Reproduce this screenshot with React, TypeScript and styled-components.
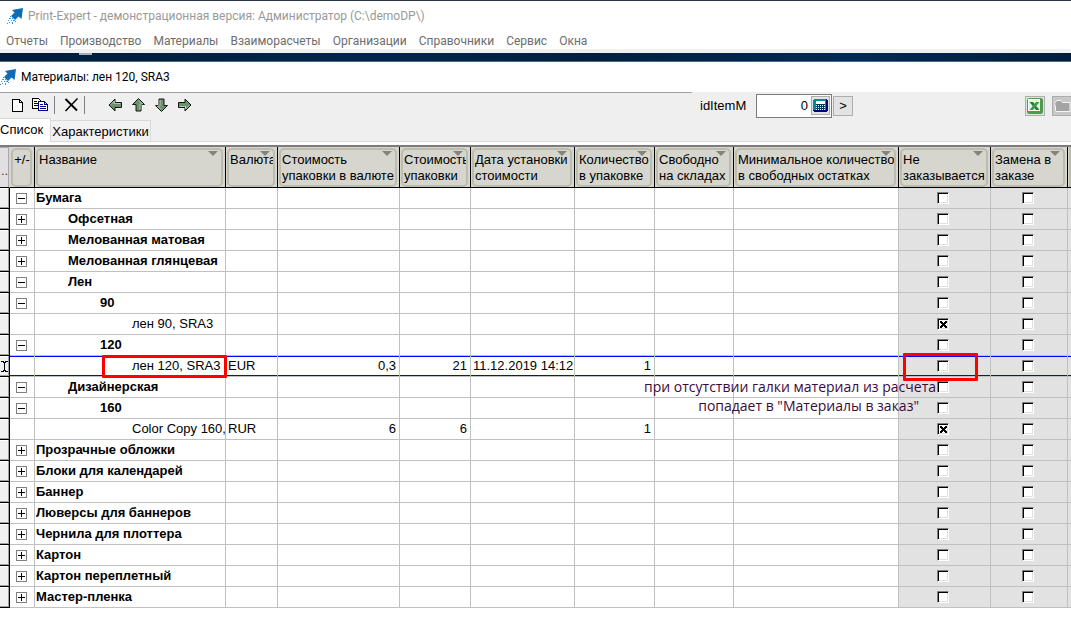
import React, { useState } from "react";
import styled, { createGlobalStyle, css } from "styled-components";

const Global = createGlobalStyle`
  *, *::before, *::after { box-sizing: border-box; }
  body { margin: 0; background: #fff; font-family: "Liberation Sans", Arial, sans-serif; font-size: 13px; color: #000; }
  button, input { font: inherit; color: inherit; }
`;

const uiFont = `Roboto, "Noto Sans", sans-serif`;
const noteFont = `"Open Sans", "Noto Sans", sans-serif`;

const Page = styled.div`
  display: flex;
  flex-direction: column;
  overflow: hidden;
`;

const AppBar = styled.header`
  border-top: 1px solid #2b3546;
  background: #fff;
`;

const TitleRow = styled.div<{ $child?: boolean }>`
  display: flex;
  align-items: center;
  gap: 5px;
  height: 30px;
  padding: ${(p) => (p.$child ? "0" : "0 0 0 7px")};
  font-family: ${uiFont};
  font-size: 12px;
  color: ${(p) => (p.$child ? "#000" : "#999")};
  white-space: nowrap;
`;

const Title = styled.h1`
  margin: 0;
  font-size: inherit;
  font-weight: 400;
`;

const MenuBar = styled.nav`
  display: flex;
  gap: 12px;
  height: 18px;
  padding-left: 6px;
`;

const MenuItem = styled.button`
  padding: 0;
  border: 0;
  background: none;
  font-family: ${uiFont};
  font-size: 12px;
  line-height: 20px;
  color: #6d6d6d;
`;

const Backdrop = styled.div`
  height: 13px;
  padding-left: 79px;
  border-top: 4px solid #f0f0f0;
  border-bottom: 1px solid #1a78c8;
  background: linear-gradient(90deg, #001c3a, #00254c 35%, #001f40 55%, #002a55 80%, #001c3a);

  &::before {
    content: "";
    display: block;
    width: 13px;
    height: 2px;
    background: #a8adb4;
  }
`;

const ToolBar = styled.div`
  display: grid;
  grid-template-columns: minmax(0, 1fr) 379px;
  height: 27px;
  background: #efefef;
`;

const ToolGroup = styled.div`
  display: flex;
  align-items: center;
  gap: 8px;
  padding: 0 0 2px 10px;
  border-top: 1px solid #a0a0a0;
`;

const ToolButton = styled.button`
  display: flex;
  padding: 0;
  border: 0;
  background: none;
`;

const ArrowGroup = styled.div`
  display: flex;
  gap: 8px;
  margin-left: 14px;
`;

const Separator = styled.span`
  width: 1px;
  height: 18px;
  margin: 0 1px 0 -2px;
  background: #808080;
`;

const FieldGroup = styled.form`
  display: flex;
  align-items: center;
  padding-left: 8px;
`;

const FieldLabel = styled.label`
  width: 56px;
  font-size: 13px;
`;

const NumberField = styled.div`
  display: flex;
  align-items: center;
  width: 76px;
  height: 24px;
  margin-right: 1px;
  padding-right: 1px;
  border: 1px solid #7a7a7a;
  background: #fff;
`;

const NumberInput = styled.input`
  flex: 1;
  min-width: 0;
  padding: 0 3px 0 0;
  border: 0;
  outline: 0;
  background: none;
  text-align: right;
  font-size: 13px;
`;

const RaisedButton = styled.button<{ $muted?: boolean }>`
  display: flex;
  align-items: center;
  justify-content: center;
  flex: none;
  width: 20px;
  height: 20px;
  padding: 0;
  border: 1px solid #adadad;
  background: ${(p) => (p.$muted ? "#c8c8c8" : "#e3e3e3")};
`;

const CalcButton = styled(RaisedButton)`
  width: 19px;
  height: 19px;
`;

const ExportGroup = styled.div`
  display: flex;
  gap: 7px;
  margin-left: auto;
  margin-right: -1px;
`;

const TabStrip = styled.div`
  display: flex;
  align-items: flex-end;
  height: 23px;
  border-bottom: 1px solid #d9d9d9;
  background: #efefef;
`;

const Tab = styled.button<{ $active?: boolean }>`
  flex: none;
  padding: 0;
  font-size: 13px;
  white-space: nowrap;
  ${(p) =>
    p.$active
      ? css`
          width: 51px;
          height: 24px;
          margin-bottom: -1px;
          padding-bottom: 3px;
          border: 1px solid #d9d9d9;
          border-width: 1px 1px 0 0;
          background: #fff;
          text-align: left;
        `
      : css`
          width: 100px;
          height: 21px;
          border: 1px solid #d9d9d9;
          border-width: 1px 1px 0 0;
          background: #f2f2f2;
        `}
`;

const GridFrame = styled.main`
  margin-top: 3px;
  border-top: 2px solid #7c7c7c;
`;

const Grid = styled.table`
  width: 100%;
  table-layout: fixed;
  border-collapse: separate;
  border-spacing: 0;
`;

const HeadCell = styled.th`
  height: 41px;
  padding: 1px 2px 0 1px;
  border-right: 1px solid #000;
  border-bottom: 1px solid #000;
  background: #d6d6ce;
  font-weight: 400;
  text-align: left;
  vertical-align: top;

  &:last-child {
    border-right: 0;
    box-shadow: inset -2px 0 #bcbcae;
  }
`;

const HeadFrame = styled.div<{ $center?: boolean }>`
  position: relative;
  height: 39px;
  padding: 2px 0 0 1px;
  border: 2px solid #bcbcae;
  border-radius: 5px;
  overflow: hidden;
  line-height: 16px;
  white-space: pre;
  text-align: ${(p) => (p.$center ? "center" : "left")};
`;

const DropMark = styled.span`
  position: absolute;
  top: 1px;
  right: 3px;
  border: 5px solid transparent;
  border-top-color: #84847c;
  border-bottom: 0;
`;

const CornerCell = styled.th`
  height: 41px;
  padding: 18px 0 0 1px;
  border-right: 1px solid #d6d6ce;
  border-bottom: 1px solid #000;
  background: #e1dfe1;
  box-shadow: inset -1px 0 #a8a8a8, inset 0 1px #a8a8a8;
  font-weight: 400;
  text-align: left;
  vertical-align: top;
  line-height: 12px;
  color: #5a3a1a;
`;

const Selector = styled.td`
  height: 21px;
  padding: 0 0 0 1px;
  border-right: 1px solid #000;
  border-bottom: 1px solid #000;
  background: #f0f0f0;
  box-shadow: inset -1px -1px #a0a0a0, inset 0 1px #fff;
`;

const Cell = styled.td<{ $right?: boolean; $shade?: boolean; $selected?: boolean }>`
  position: relative;
  height: 21px;
  padding: ${(p) => (p.$right ? "0 3px 0 2px" : p.$shade ? "0 5px 0 2px" : "0 2px")};
  border-right: 1px solid #c0c0c0;
  border-bottom: 1px solid #c0c0c0;
  background: ${(p) => (p.$shade ? "#e2e2e2" : "#fff")};
  line-height: 20px;
  vertical-align: top;
  white-space: nowrap;
  text-align: ${(p) => (p.$right ? "right" : "left")};
  ${(p) => p.$selected && "box-shadow: inset 0 1px #00f, inset 0 -1px #00f;"}

  &:last-child {
    padding: 0;
    border-right: 0;
  }
`;

const NameText = styled.div<{ $level: number; $bold: boolean }>`
  margin: 0 -2px 0 -1px;
  padding-left: ${(p) => p.$level * 32}px;
  overflow: hidden;
  line-height: 19px;
  font-weight: ${(p) => (p.$bold ? 700 : 400)};
`;

const Expander = styled.button`
  display: flex;
  margin: 5px 0 0 4px;
  padding: 0;
  border: 0;
  background: none;
`;

const Check = styled.input`
  appearance: none;
  display: block;
  width: 12px;
  height: 12px;
  margin: 4px auto 0;
  border: 1px solid #808080;
  border-right-color: #fff;
  border-bottom-color: #fff;
  background: #fff;
  box-shadow: inset 1px 1px #000, inset -1px -1px #e0e0e0;

  &:checked {
    background-image:
      linear-gradient(45deg, transparent 38%, #000 38%, #000 62%, transparent 62%),
      linear-gradient(-45deg, transparent 38%, #000 38%, #000 62%, transparent 62%);
    background-position: 2px 2px;
    background-size: 7px 7px;
    background-repeat: no-repeat;
  }
`;

const Highlight = styled.span<{ $wide?: boolean }>`
  position: absolute;
  z-index: 2;
  border: 3px solid #f00;
  border-radius: 1px;
  pointer-events: none;
  ${(p) => (p.$wide ? "inset: -1px -2px -2px 67px;" : "inset: -3px 12px -5px 4px;")}
`;

const Note = styled.p`
  position: absolute;
  z-index: 2;
  top: 0;
  right: 54px;
  margin: 0;
  font-family: ${noteFont};
  font-size: 14px;
  line-height: 19px;
  text-align: right;
  color: #3c0a3c;
  pointer-events: none;
`;

const NoteLine = styled.span<{ $inset?: boolean }>`
  display: block;
  padding-right: ${(p) => (p.$inset ? 17 : 0)}px;
`;

function Logo() {
  return (
    <svg width="16" height="16" viewBox="0 0 16 16" aria-hidden="true">
      <path d="M5 2 16 0 14.500 11 11.500 8.500 8 12 4 8 7.500 4.500Z" fill="#0f6cb6" />
      <path
        d="M3 8h1v1H3zM5 10h1v1H5zM2 10h2v1H2zM4 12h1v1H4zM6 12h2v1H6zM1 12h1v1H1zM2 14h1v1H2zM0 15h1v1H0zM5 14h1v2H5zM8 13h1v1H8z"
        fill="#4a90c8"
      />
    </svg>
  );
}

function DocIcon() {
  return (
    <svg width="14" height="16" viewBox="0 0 14 16" shapeRendering="crispEdges">
      <path d="M2.500 2.500H9.500L12.500 5.500V14.500H2.500Z" fill="#fff" stroke="#000" />
      <path d="M9.500 2.500V5.500H12.500" fill="none" stroke="#000" />
    </svg>
  );
}

function CopyIcon() {
  return (
    <svg width="16" height="16" viewBox="0 0 16 16" shapeRendering="crispEdges">
      <path d="M.5 1.500H6.500L8.500 3.500V11.500H.5Z" fill="#fff" stroke="#000" />
      <path d="M2 4.500H5M2 6.500H6M2 8.500H6" stroke="#000" />
      <path d="M6.500 4.500H12.500L15.500 7.500V13.500H6.500Z" fill="#fff" stroke="#000080" />
      <path d="M12.500 4.500V7.500H15.500M8 7.500H11M8 9.500H14M8 11.500H14" fill="none" stroke="#000080" />
    </svg>
  );
}

function DeleteIcon() {
  return (
    <svg width="14" height="16" viewBox="0 0 14 16">
      <path d="M1.500 2 13 13.500" stroke="#000" strokeWidth="2" />
      <path d="M13.500 1.500 1.500 14" stroke="#000" strokeWidth="1.500" />
    </svg>
  );
}

function ArrowIcon({ angle }: { angle: number }) {
  return (
    <svg width="15" height="14" viewBox="0 0 15 14">
      <g transform={`rotate(${angle} 7.500 7)`}>
        <path d="M1 7 7 1V4.500H13.500V9.500H7V13Z" fill="#6d9070" stroke="#101810" />
        <path d="M3 6.500 6.500 3V5.500H12.500" fill="none" stroke="#b4ccb4" />
      </g>
    </svg>
  );
}

function CalcIcon() {
  return (
    <svg width="15" height="13" viewBox="0 0 15 13" shapeRendering="crispEdges">
      <path d="M1 0H14V1H15V12H14V13H1V12H0V1H1Z" fill="#000080" />
      <path d="M1 0H13V11H0V1H1Z" fill="#008c94" />
      <rect x="3" y="2" width="9" height="9" fill="#003c50" />
      <rect x="3" y="2" width="9" height="3" fill="#fff" />
      <path d="M3 6.500H12M3 8.500H12M3 10.500H12" stroke="#e8ffff" strokeDasharray="1 1" />
    </svg>
  );
}

function ExcelIcon() {
  return (
    <svg width="16" height="16" viewBox="0 0 16 16">
      <rect x=".5" y=".5" width="15" height="15" rx="1" fill="#fff" stroke="#4f9a4f" />
      <path d="M14 1V15M1 14H15" stroke="#4f9a4f" strokeWidth="2" />
      <rect x="2" y="2" width="10" height="10" fill="#e4f2df" />
      <path d="M2.500 4H6L12.500 12H9Z" fill="#257a35" />
      <path d="M12.500 4H9L2.500 12H6Z" fill="#3f9a48" />
    </svg>
  );
}

function FolderIcon() {
  return (
    <svg width="18" height="14" viewBox="0 0 18 14">
      <path d="M2.500 12V8L1.500 4.500 4 1.500H8L9.500 3.500H17V12.500H3Z" fill="#a4a4a4" stroke="#f4f4f4" />
    </svg>
  );
}

function ExpandIcon({ open }: { open: boolean }) {
  return (
    <svg width="11" height="11" viewBox="0 0 11 11" shapeRendering="crispEdges">
      <rect x=".5" y=".5" width="10" height="10" fill="#fff" stroke="#808080" />
      <path d={open ? "M2 5.500H9" : "M2 5.500H9M5.500 2V9"} stroke="#000" />
    </svg>
  );
}

function CaretIcon() {
  return (
    <svg width="7" height="16" viewBox="0 0 7 16" shapeRendering="crispEdges">
      <path d="M0 4.500H3M4 4.500H7M2 5.500H5M2 13.500H5M0 14.500H3M4 14.500H7" stroke="#000" />
      <path d="M3.500 5V14" stroke="#000" />
    </svg>
  );
}

const menu = ["Отчеты", "Производство", "Материалы", "Взаиморасчеты", "Организации", "Справочники", "Сервис", "Окна"];

const arrows = [
  { angle: 0, label: "Назад" },
  { angle: 90, label: "Вверх" },
  { angle: 270, label: "Вниз" },
  { angle: 180, label: "Вперед" },
];

const columns = [
  { width: 191, title: "Название" },
  { width: 52, title: "Валюта" },
  { width: 122, title: "Стоимость\nупаковки в валюте" },
  { width: 71, title: "Стоимость\nупаковки" },
  { width: 104, title: "Дата установки\nстоимости" },
  { width: 80, title: "Количество\nв упаковке" },
  { width: 79, title: "Свободно\nна складах" },
  { width: 165, title: "Минимальное количество\nв свободных остатках" },
  { width: 92, title: "Не\nзаказывается" },
  { width: 77, title: "Замена в\nзаказе" },
];

type Row = {
  name: string;
  level: number;
  open?: boolean;
  leaf?: boolean;
  values?: string[];
  skip?: boolean;
  selected?: boolean;
  note?: string[];
};

const rows: Row[] = [
  { name: "Бумага", level: 0, open: true },
  { name: "Офсетная", level: 1 },
  { name: "Мелованная матовая", level: 1 },
  { name: "Мелованная глянцевая", level: 1 },
  { name: "Лен", level: 1, open: true },
  { name: "90", level: 2, open: true },
  { name: "лен 90, SRA3", level: 3, leaf: true, skip: true },
  { name: "120", level: 2, open: true },
  { name: "лен 120, SRA3", level: 3, leaf: true, selected: true, values: ["EUR", "0,3", "21", "11.12.2019 14:12", "1"] },
  {
    name: "Дизайнерская",
    level: 1,
    open: true,
    note: ["при отсутствии галки материал из расчета", 'попадает в "Материалы в заказ"'],
  },
  { name: "160", level: 2, open: true },
  { name: "Color Copy 160,", level: 3, leaf: true, skip: true, values: ["RUR", "6", "6", "", "1"] },
  { name: "Прозрачные обложки", level: 0 },
  { name: "Блоки для календарей", level: 0 },
  { name: "Баннер", level: 0 },
  { name: "Люверсы для баннеров", level: 0 },
  { name: "Чернила для плоттера", level: 0 },
  { name: "Картон", level: 0 },
  { name: "Картон переплетный", level: 0 },
  { name: "Мастер-пленка", level: 0 },
];

const rightAligned = [false, true, true, false, true, false, false];

function MaterialRow({ row }: { row: Row }) {
  const [skip, setSkip] = useState(Boolean(row.skip));
  const [swap, setSwap] = useState(false);
  return (
    <tr>
      <Selector>{row.selected && <CaretIcon />}</Selector>
      <Cell $selected={row.selected}>
        {!row.leaf && (
          <Expander type="button" aria-label={row.name} aria-expanded={Boolean(row.open)}>
            <ExpandIcon open={Boolean(row.open)} />
          </Expander>
        )}
      </Cell>
      <Cell $selected={row.selected}>
        <NameText $level={row.level} $bold={!row.leaf}>
          {row.name}
        </NameText>
        {row.selected && <Highlight $wide />}
      </Cell>
      {rightAligned.map((right, i) => (
        <Cell key={i} $right={right} $selected={row.selected}>
          {row.values?.[i]}
        </Cell>
      ))}
      <Cell $shade $selected={row.selected}>
        <Check
          type="checkbox"
          aria-label={`Не заказывается: ${row.name}`}
          checked={skip}
          onChange={(e) => setSkip(e.target.checked)}
        />
        {row.selected && <Highlight />}
        {row.note && (
          <Note>
            <NoteLine>{row.note[0]}</NoteLine>
            <NoteLine $inset>{row.note[1]}</NoteLine>
          </Note>
        )}
      </Cell>
      <Cell $shade $selected={row.selected}>
        <Check
          type="checkbox"
          aria-label={`Замена в заказе: ${row.name}`}
          checked={swap}
          onChange={(e) => setSwap(e.target.checked)}
        />
      </Cell>
      <Cell $shade $selected={row.selected} />
    </tr>
  );
}

export default function App() {
  return (
    <Page>
      <Global />
      <AppBar>
        <TitleRow>
          <Logo />
          <Title>Print-Expert - демонстрационная версия: Администратор (C:\demoDP\)</Title>
        </TitleRow>
        <MenuBar>
          {menu.map((m) => (
            <MenuItem key={m} type="button">
              {m}
            </MenuItem>
          ))}
        </MenuBar>
      </AppBar>
      <Backdrop />
      <TitleRow $child>
        <Logo />
        <Title as="h2">Материалы: лен 120, SRA3</Title>
      </TitleRow>
      <ToolBar>
        <ToolGroup>
          <ToolButton type="button" aria-label="Создать">
            <DocIcon />
          </ToolButton>
          <ToolButton type="button" aria-label="Копировать">
            <CopyIcon />
          </ToolButton>
          <Separator />
          <ToolButton type="button" aria-label="Удалить">
            <DeleteIcon />
          </ToolButton>
          <Separator />
          <ArrowGroup>
            {arrows.map((a) => (
              <ToolButton key={a.angle} type="button" aria-label={a.label}>
                <ArrowIcon angle={a.angle} />
              </ToolButton>
            ))}
          </ArrowGroup>
        </ToolGroup>
        <FieldGroup onSubmit={(e) => e.preventDefault()}>
          <FieldLabel htmlFor="idItemM">idItemM</FieldLabel>
          <NumberField>
            <NumberInput id="idItemM" defaultValue="0" />
            <CalcButton type="button" aria-label="Калькулятор">
              <CalcIcon />
            </CalcButton>
          </NumberField>
          <RaisedButton type="submit">&gt;</RaisedButton>
          <ExportGroup>
            <RaisedButton type="button" aria-label="Excel">
              <ExcelIcon />
            </RaisedButton>
            <RaisedButton type="button" $muted aria-label="Открыть папку">
              <FolderIcon />
            </RaisedButton>
          </ExportGroup>
        </FieldGroup>
      </ToolBar>
      <TabStrip role="tablist">
        <Tab type="button" role="tab" aria-selected="true" $active>
          Список
        </Tab>
        <Tab type="button" role="tab" aria-selected="false">
          Характеристики
        </Tab>
      </TabStrip>
      <GridFrame>
        <Grid>
          <colgroup>
            <col width={10} />
            <col width={25} />
            {columns.map((c) => (
              <col key={c.title} width={c.width} />
            ))}
            <col />
          </colgroup>
          <thead>
            <tr>
              <CornerCell>..</CornerCell>
              <HeadCell>
                <HeadFrame $center>+/-</HeadFrame>
              </HeadCell>
              {columns.map((c) => (
                <HeadCell key={c.title}>
                  <HeadFrame>
                    <DropMark />
                    {c.title}
                  </HeadFrame>
                </HeadCell>
              ))}
              <HeadCell />
            </tr>
          </thead>
          <tbody>
            {rows.map((row) => (
              <MaterialRow key={row.name} row={row} />
            ))}
          </tbody>
        </Grid>
      </GridFrame>
    </Page>
  );
}
